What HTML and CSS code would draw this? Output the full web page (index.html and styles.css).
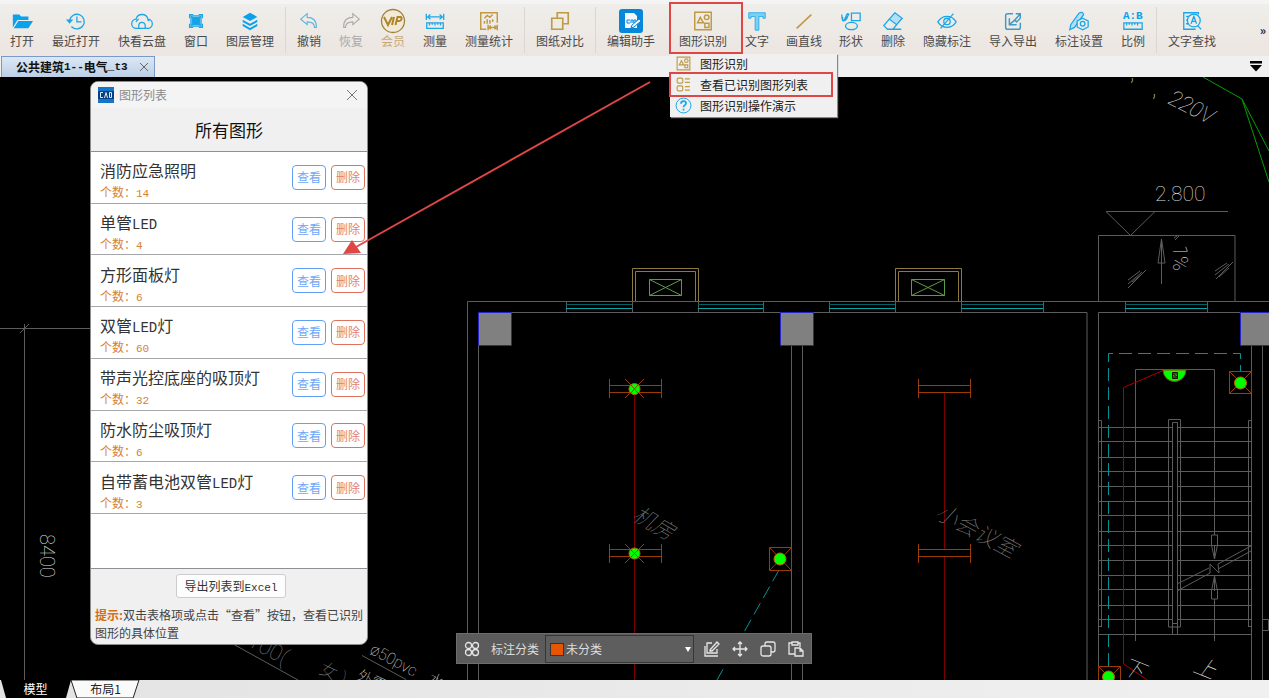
FILE: index.html
```html
<!DOCTYPE html>
<html lang="zh-CN">
<head>
<meta charset="utf-8">
<title>公共建筑1--电气_t3</title>
<link rel="stylesheet" href="styles.css">
</head>
<body>
<div class="app">
  <header class="toolbar">
    <button class="tool"><svg class="icon" viewBox="0 0 24 24"><path fill="#0aa2ea" d="M2 19V5h7l2 2h8v4H7z"/><path fill="#0aa2ea" d="M8 12h16l-5 8H3z"/></svg><span>打开</span></button>
    <button class="tool wide"><svg class="icon line" viewBox="0 0 24 24"><path d="M5 12a8 8 0 1 1 2 6M13 7v6h5"/><path fill="#0aa2ea" d="M2.500 11h5L5 14z"/></svg><span>最近打开</span></button>
    <button class="tool wide"><svg class="icon line" viewBox="0 0 24 24"><path d="M8 20H6a5 5 0 0 1-.5-10 6.700 6.700 0 0 1 13 0 5 5 0 0 1-.5 10h-2M8.500 20v-3a3.500 3.500 0 0 1 7 0v3zM5.500 13a5 5 0 0 1 3-3M18 10.500l2 1.500"/></svg><span>快看云盘</span></button>
    <button class="tool"><svg class="icon line" viewBox="0 0 24 24"><path fill="#0aa2ea" d="M8 8h8v8H8z"/><path d="M5 9V5h4M15 5h4v4M19 15v4h-4M9 19H5v-4M6 6l12 12M18 6 6 18M8 6.500h8M8 17.500h8M6.500 8v8M17.500 8v8"/></svg><span>窗口</span></button>
    <button class="tool wide"><svg class="icon" viewBox="0 0 24 24"><path fill="#0aa2ea" d="m12 3 8 4.500-8 4.500-8-4.500zM4 10.500l8 4.500 8-4.500V13l-8 4.500L4 13zM4 15l8 4.500 8-4.500v2.500L12 22l-8-4.500z"/></svg><span>图层管理</span></button>
    <i class="sep"></i>
    <button class="tool"><svg class="icon soft" viewBox="0 0 24 24"><path d="m3 10 7-6v4c6 0 10 3 10 10v1h-2c0-4-3-6-8-6v3z"/></svg><span>撤销</span></button>
    <button class="tool dim"><svg class="icon grey" viewBox="0 0 24 24"><path d="m21 10-7-6v4C8 8 4 11 4 18v1h2c0-4 3-6 8-6v3z"/></svg><span>恢复</span></button>
    <button class="tool vip"><svg class="icon big" viewBox="0 0 26 26"><circle cx="13" cy="13" r="11.500" fill="#f1ead8" stroke="#a3823d" stroke-width="1.300"/><path fill="none" stroke="#b08527" stroke-width="2" d="m4 9 4 8 4-8M14 9l-2 8M15.500 17l2-8h3c2 0 1 4-1 4H17"/></svg><span>会员</span></button>
    <button class="tool"><svg class="icon line" viewBox="0 0 24 24"><path d="M2.500 4v7M21.500 4v7M4 7.500h16M7 5 4 7.500 7 10M17 5l3 2.500-3 2.500M3 14h18v6H3zM6 14v3M9 14v2M12 14v3M15 14v2M18 14v3"/></svg><span>测量</span></button>
    <button class="tool wide"><svg class="icon gold" viewBox="0 0 24 24"><path d="M9 21H3V3h18v11M7 15v-3M10 15v-5M13 15v-4M16 13v-3M7 9l3-3 3 2 3-3M11 16v6M21 16v6M12 19h8M14 17l-2 2 2 2M18 17l2 2-2 2"/></svg><span>测量统计</span></button>
    <i class="sep"></i>
    <button class="tool wide"><svg class="icon gold" viewBox="0 0 24 24"><path stroke-width="1.800" d="M9 9V3h12v12h-6M3 9h12v12H3z"/></svg><span>图纸对比</span></button>
    <i class="sep"></i>
    <button class="tool wide"><svg class="icon big" viewBox="0 0 26 26"><rect x="1" y="1" width="24" height="24" rx="3" fill="#0787da"/><path fill="#f2f8fd" d="M7 5h9l3 3v12H7z"/><path d="M12 12H9v3h3M13 15v-3h2v3M16 12h2v3h-2z" fill="none" stroke="#0787da"/><path stroke="#0787da" fill="#f2f8fd" d="m14 17 7-6 2 2-7 6-3 1z"/></svg><span>编辑助手</span></button>
    <div class="tool-group">
      <button class="tool wide"><svg class="icon gold" viewBox="0 0 24 24"><path d="M3 2.500h18v19H3zM6 14l3-6 3.500 6zM14 14.500h4.500v4.500H14z"/><circle cx="16" cy="8" r="2.500"/></svg><span>图形识别</span></button>
      <div class="menu">
        <button class="menu-item"><svg viewBox="0 0 24 24" class="menu-icon gold"><path d="M3 3h18v18H3zM6 14l3-6 3.500 6zM14 14h4v4h-4z"/><circle cx="16" cy="8" r="2.500"/></svg><span>图形识别</span></button>
        <button class="menu-item marked"><svg viewBox="0 0 24 24" class="menu-icon gold"><rect x="3" y="3" width="8" height="7" rx="2"/><rect x="3" y="14" width="8" height="7" rx="2"/><path d="M14 4h7M14 9h7M14 15h7M14 20h7"/></svg><span>查看已识别图形列表</span></button>
        <button class="menu-item"><svg viewBox="0 0 24 24" class="menu-icon line"><circle cx="12" cy="12" r="10.500"/><path stroke-width="2.500" d="M8.500 9.500c0-5 7-4.500 7-.5 0 2.500-3.500 2.500-3.500 5.500M12 16.500v2.500"/></svg><span>图形识别操作演示</span></button>
      </div>
    </div>
    <button class="tool"><svg class="icon" viewBox="0 0 24 24"><path fill="#7fd0f5" stroke="#25ace9" d="M3 3h18v6h-2.500V7H14v15h-4V7H5.500v2H3z"/></svg><span>文字</span></button>
    <button class="tool mid"><svg class="icon gold" viewBox="0 0 24 24"><path stroke-width="1.800" d="M4 20 20 5"/></svg><span>画直线</span></button>
    <button class="tool"><svg class="icon line" viewBox="0 0 24 24"><path d="M12.500 3.500H22v8h-9.500zM2 5c0 8 2 9 4 3s4-5 2 0-6 5-5-.500M10 4 5 12"/><ellipse cx="12.500" cy="17.500" rx="6.500" ry="4"/></svg><span>形状</span></button>
    <button class="tool"><svg class="icon line" viewBox="0 0 24 24"><path fill="#b7dff2" d="m14 3 8 6-6 7-8-6z"/><path d="m8 10-6 7 4 4h6l4-5M6 21h15"/></svg><span>删除</span></button>
    <button class="tool wide"><svg class="icon line" viewBox="0 0 24 24"><path d="M2 13c5-8 15-8 20 0-5 8-15 8-20 0zM19 4 5 20"/><circle cx="12" cy="12.500" r="3.500"/></svg><span>隐藏标注</span></button>
    <button class="tool wide"><svg class="icon export" viewBox="0 0 24 24"><path d="M12 4H6a2 2 0 0 0-2 2v13a2 2 0 0 0 2 2h12a2 2 0 0 0 2-2v-5M15 4h5v5M20 4l-7 8M8 9v7h8M8 16l6-5 2 2 4-4"/></svg><span>导入导出</span></button>
    <button class="tool wide"><svg class="icon line" viewBox="0 0 24 24"><path fill="#b7dff2" d="M12 3.500q4-2.500 5 1.500L7 19l-5 2.500L3 16z"/><path fill="#edebe8" d="m16 9 6 3v6.500l-6 3-6-3V12z"/><circle cx="16" cy="15" r="2.500"/></svg><span>标注设置</span></button>
    <button class="tool"><svg class="icon line" viewBox="0 0 24 24"><text x="1" y="10" class="ratio">A:B</text><path d="M2 14h20v7H2zM5 14v3M8 14v2M11 14v3M14 14v2M17 14v3"/></svg><span>比例</span></button>
    <i class="sep"></i>
    <button class="tool wide"><svg class="icon line" viewBox="0 0 24 24"><path d="M19 5V3H3v18h13M5.500 7h3M5.500 11h2M5.500 15h3M18 17l4 4M11 15l3-8 3 8M12 12.500h4"/><circle cx="14" cy="11.500" r="7"/></svg><span>文字查找</span></button>
    <button class="more" aria-label="更多">»</button>
  </header>

  <nav class="doc-tabs">
    <button class="doc-tab">公共建筑<span class="latin">1--</span>电气<span class="latin">_t3</span><svg class="tab-close" viewBox="0 0 8 8"><path d="m0 0 8 8M8 0 0 8"/></svg></button>
    <button class="tab-list" aria-label="文档列表"><svg viewBox="0 0 12 11"><path d="M0 0h12v2.500H0zM0 4h12l-6 6.500z"/></svg></button>
  </nav>

  <main class="canvas">
    <svg class="drawing">
      <g transform="translate(0,-77)">
        <g class="wall">
          <path d="M467.500 680V301.500H1269M478.500 680V345M511 312.500h269M813 312.500h274V680M791.500 345v335M802.500 345v335M1098.500 680V312.500H1240M1098.500 301V235.500H1235V301M1251.500 345v335M1262.500 345v335M1262.500 619.500h6v11h-6"/>
          <path d="M566.500 301v11M632.500 301v11M698.500 301v11M763.500 301v11M829.500 301v11M895.500 301v11M961.500 301v11M1043.500 301v11M1125.500 301v11M1207.500 301v11"/>
          <path d="M0 328.500h90M24.500 324v356M20 333l9-9M1106 211.500h122M1106 211.500l24.500 24 24.500-24"/>
          <path d="M1161.500 284v-45l-3.500 24h7l-3.500-24M1128 280l12-9M1128 284l14-12M1128 288l18-18M1132 282l10-8M1215 271l12-8M1215 275l14-11M1216 279l17-17M1219 277l10-9M1174 238l3-2M1175 240l4-4"/>
          <path d="M1135.500 641V369.500H1214.500V535M1214.500 599v42M1101.500 627V420.500h-3M1098 626.500h3M1248.500 627V420.500h3M1248 626.500h3M1168.500 627V419.500h12V627zM1172.500 634V422.500h5V634M1172.500 623.500h5"/>
          <path d="M1098 427.500h74M1177 427.500h74M1098 441.500h74M1177 441.500h74M1098 457.500h74M1177 457.500h74M1098 471.500h74M1177 471.500h74M1098 486.500h74M1177 486.500h74M1098 501.500h74M1177 501.500h74M1098 515.500h74M1177 515.500h74M1098 531.500h74M1177 531.500h74M1098 545.500h74M1177 545.500h74M1098 560.500h74M1177 560.500h74M1098 575.500h74M1177 575.500h74M1098 589.500h74M1177 589.500h74M1098 605.500h74M1177 605.500h74M1098 619.500h74M1177 619.500h74M1098 634.500h153"/>
          <path d="m1177 584 32-16M1177 591l33-18v-9l9 9-1-9 33-18M1218 569l33-18M1211.500 535h6v10l-3 14-3-14zM1214.500 559v-14M1211.500 599h6v-8l-3-15-3 15zM1214.500 576v15"/>
          <path d="m233 644 65 36M362 655.500l44 24"/>
        </g>
        <g class="teal">
          <path d="M566 304.500h66M698 304.500h65M829 304.500h66M962 304.500h81M1125 304.500h82"/>
          <path class="bright" d="M566 308.500h66M698 308.500h65M829 308.500h66M962 308.500h81M1125 308.500h82"/>
          <path class="dash" d="M1108.500 666V353.500H1240.500V371M779 570 717 680"/>
        </g>
        <g class="bay"><path d="M632.500 301V268.500h66V301M635.500 301V271.500h60V301M895.500 301V268.500h66V301M898.500 301V271.500h60V301"/></g>
        <g class="green"><path d="M649.500 279.500h32v16h-32zl32 16M681.500 279.500l-32 16M911.500 279.500h33v16h-33zl33 16M944.500 279.500l-33 16"/></g>
        <g class="beam"><path d="M1203 77l39 22 27 83M1242 99l27 52"/></g>
        <g class="column"><path d="M478.500 312.500h33v33h-33zM780.500 312.500h33v33h-33zM1240.500 312.500h33v33h-33z"/></g>
        <g class="wire"><path d="M634.500 393v287M944.500 393v157M944.500 557v123"/><path class="hot" d="M1163 370.500l-39.500 17V664l24 16"/></g>
        <g class="lamp">
          <path d="M609.500 379v19M661.500 379v19M609 385.500h52M609 392.500h52M609.500 544v19M661.500 544v19M609 549.500h52M609 556.500h52M918.500 379v19M970.500 379v19M918 385.500h52M918 392.500h52M918.500 544v19M970.500 544v19M918 549.500h52M918 556.500h52"/>
          <path d="m625 379 19 19M644 379l-19 19M625 544l19 19M644 544l-19 19M769.500 547.500h22v23h-22zl22 23M791.500 547.500l-22 23M1229.500 371.500h22v22h-22zl22 22M1251.500 371.500l-22 22M1098.500 680v-13.500h22V680M1098.500 666.500l22 22M1120.500 666.500l-22 22"/>
          <circle cx="634.500" cy="389" r="5.500"/><circle cx="634.500" cy="553.500" r="5.500"/><circle cx="780" cy="559" r="6"/><circle cx="1240.500" cy="383" r="6"/><circle cx="1108.500" cy="677" r="6"/>
          <path d="m631 385 7 8M638 385l-7 8M631 550l7 7M638 550l-7 7"/>
          <path fill="#0f0" d="M1163 370h23a11.500 11.500 0 0 1-23 0z"/><path stroke="#210" fill="#3a3" d="M1172.500 372.500h5v6h-5zM1177 374h-4l4 3h-4"/>
        </g>
        <g class="note">
          <text font-size="21" x="1155" y="201">2.800</text>
          <text font-size="20" transform="translate(40,534) rotate(90)">8400</text>
          <text font-size="20" transform="translate(1173,245) rotate(90)">1%</text>
          <text font-size="22" font-style="italic" transform="translate(1167,103) rotate(27)">220V</text>
          <text font-size="24" x="1152" y="96">,</text><text font-size="24" x="1130" y="80">,</text>
          <text font-size="16" transform="translate(369,653) rotate(28)">ø50pvc</text>
          <text font-size="15" transform="translate(356,679) rotate(25)">外需</text>
          <text font-size="15" transform="translate(427,682) rotate(25)">水</text>
          <text font-size="22" font-style="italic" transform="translate(1120,672) rotate(22)">下</text>
          <text font-size="22" font-style="italic" transform="translate(1192,671) rotate(22)">上</text>
        </g>
        <g class="note faint">
          <text font-size="22" font-style="italic" transform="translate(631,519) rotate(30)">机房</text>
          <text font-size="22" font-style="italic" transform="translate(934,517) rotate(28)">小会议室</text>
          <text font-size="22" transform="translate(246,645) rotate(28)">100(</text>
          <text font-size="18" transform="translate(318,673) rotate(25)">女 )</text>
        </g>
      </g>
    </svg>

    <section class="dialog">
      <header class="dialog-bar">
        <svg class="dialog-logo" viewBox="0 0 16 16"><path fill="#1775c9" d="M0 0h16v16H0z"/><path fill="#0b3f83" d="M0 4h16v8H0z"/><path fill="none" stroke="#d5ebff" d="M5 5.500H2.500v5H5M6.500 11l1.500-5.500L9.500 11M11.500 5.500h2v5h-2z"/></svg>
        <span>图形列表</span>
        <button class="dialog-close" aria-label="关闭"><svg viewBox="0 0 10 10"><path d="m0 0 10 10M10 0 0 10"/></svg></button>
      </header>
      <h1 class="dialog-title">所有图形</h1>
      <div class="list-box">
        <ul class="list">
          <li><div class="entry"><b>消防应急照明</b><small>个数：<span class="latin">14</span></small></div><button class="view">查看</button><button class="remove">删除</button></li>
          <li><div class="entry"><b>单管<span class="latin">LED</span></b><small>个数：<span class="latin">4</span></small></div><button class="view">查看</button><button class="remove">删除</button></li>
          <li><div class="entry"><b>方形面板灯</b><small>个数：<span class="latin">6</span></small></div><button class="view">查看</button><button class="remove">删除</button></li>
          <li><div class="entry"><b>双管<span class="latin">LED</span>灯</b><small>个数：<span class="latin">60</span></small></div><button class="view">查看</button><button class="remove">删除</button></li>
          <li><div class="entry"><b>带声光控底座的吸顶灯</b><small>个数：<span class="latin">32</span></small></div><button class="view">查看</button><button class="remove">删除</button></li>
          <li><div class="entry"><b>防水防尘吸顶灯</b><small>个数：<span class="latin">6</span></small></div><button class="view">查看</button><button class="remove">删除</button></li>
          <li><div class="entry"><b>自带蓄电池双管<span class="latin">LED</span>灯</b><small>个数：<span class="latin">3</span></small></div><button class="view">查看</button><button class="remove">删除</button></li>
        </ul>
      </div>
      <footer class="dialog-foot">
        <button class="export-btn">导出列表到<span class="latin">Excel</span></button>
        <p class="hint"><strong>提示:</strong>双击表格项或点击“查看”按钮，查看已识别图形的具体位置</p>
      </footer>
    </section>

    <div class="float-bar">
      <svg class="float-icon" viewBox="0 0 16 16"><circle cx="4.500" cy="4.500" r="3"/><circle cx="11.500" cy="4.500" r="3"/><circle cx="4.500" cy="11.500" r="3"/><circle cx="11.500" cy="11.500" r="3"/></svg>
      <label class="float-label" for="category">标注分类</label>
      <div class="category"><i class="swatch"></i><select id="category"><option>未分类</option></select></div>
      <div class="float-actions">
        <button aria-label="编辑"><svg class="float-icon" viewBox="0 0 16 16"><path d="M8 2H3v10h10V8M1 5v10h13M6 9l7-8 2 2-7 7H6z"/></svg></button>
        <button aria-label="移动"><svg class="float-icon" viewBox="0 0 16 16"><path d="M8 1v14M1 8h14M6 3l2-2 2 2M6 13l2 2 2-2M3 6 1 8l2 2M13 6l2 2-2 2"/></svg></button>
        <button aria-label="复制"><svg class="float-icon" viewBox="0 0 16 16"><rect x="1" y="5" width="10" height="10" rx="2"/><path d="M5 5V3q0-2 2-2h6q2 0 2 2v6q0 2-2 2h-2"/></svg></button>
        <button aria-label="粘贴"><svg class="float-icon" viewBox="0 0 16 16"><path d="M7 13H1V2h3M10 2h2v4M4 1h6v3H4zM7 7h5l3 3v5H7zM12 7v3h3"/></svg></button>
      </div>
    </div>

    <svg class="pointer"><g transform="translate(0,-77)"><path stroke="#df4646" stroke-width="2" d="M650 82 356 247"/><path fill="#df4646" d="m343 254 9-14 9 13z"/></g></svg>
  </main>

  <nav class="sheets">
    <button class="sheet active">模型</button>
    <button class="sheet"><svg class="edge" viewBox="0 0 70 18" preserveAspectRatio="none"><path d="M0 0h69l-6 18H6z"/></svg><span>布局1</span></button>
  </nav>
</div>
</body>
</html>
```
FILE: styles.css
```css
* { box-sizing: border-box; }
body { margin: 0; font: 12px/16px "Noto Sans CJK SC", sans-serif; color: #222; }
button { font: inherit; color: inherit; background: none; border: 0; padding: 0; }
svg { display: block; fill: none; }
.app { display: flex; flex-direction: column; height: 100vh; background: #f0f0f0; }
.latin { font-family: "Liberation Mono", monospace; font-size: 11px; line-height: 1; }

.toolbar { display: flex; align-items: stretch; height: 56px; padding-left: 1px; border-top: 4px solid #f4f4f4; background: linear-gradient(#efeeea, #ece5e1); }
.tool { display: flex; flex: none; flex-direction: column; align-items: center; width: 42px; padding-top: 6px; gap: 1px; color: #4a4a4a; white-space: nowrap; }
.tool.mid { width: 52px; }
.tool.wide { width: 66px; }
.icon { width: 22px; height: 22px; overflow: visible; }
.icon.big { width: 26px; height: 26px; margin: -2px 0; }
.line { stroke: #1aa7e8; stroke-width: 1.4; }
.soft { stroke: #58b4dc; stroke-width: 1.2; }
.grey { stroke: #aaa; stroke-width: 1.2; }
.gold { stroke: #c09a45; stroke-width: 1.6; }
.export { stroke: #4499c3; stroke-width: 1.6; }
.ratio { font: bold 12px "Liberation Mono", monospace; fill: #0aa2ea; stroke: none; }
.tool.dim { color: #aaa; }
.tool.vip { color: #c9a877; }
.sep { flex: none; width: 1px; margin: 3px 2px; background: #d9d6d3; }
.more { margin-left: auto; padding-right: 3px; font-weight: bold; }

.tool-group { position: relative; flex: none; margin-left: 6px; }
.tool-group::after { content: ""; position: absolute; inset: -2px -7px 2px -1px; border: 2px solid #df4646; pointer-events: none; }
.menu { position: absolute; z-index: 5; top: 50px; left: 0; background: #f0f0f0; box-shadow: 1px 1px 1px #888; }
.menu-item { display: flex; align-items: center; gap: 8px; width: 167px; height: 21px; padding: 0 0 2px 5px; white-space: nowrap; }
.menu-icon { width: 17px; height: 17px; }
.marked { position: relative; }
.marked::after { content: ""; position: absolute; inset: -3px 4px -1px -1px; border: 2px solid #df4646; }

.doc-tabs { display: flex; flex: none; justify-content: space-between; height: 21px; padding: 0 7px 0 1px; background: #f0f0f0; }
.doc-tab { display: flex; align-items: center; padding: 0 6px 0 14px; border: 1px solid #799bc9; border-bottom: 0; background: linear-gradient(#dce7f4, #bccfe7); font-weight: bold; color: #111; }
.tab-close { width: 8px; height: 8px; margin-left: 12px; stroke: #666; }
.tab-list svg { width: 12px; height: 11px; fill: #000; }

.canvas { position: relative; flex: 1; min-height: 0; overflow: hidden; background: #000; }
.drawing, .pointer { position: absolute; inset: 0; width: 100%; height: 100%; }
.pointer { pointer-events: none; }
.wall { stroke: #5c5c5c; }
.teal { stroke: #045f62; }
.teal .bright { stroke: #08a5a8; }
.teal .dash { stroke: #079093; stroke-dasharray: 13 6; }
.bay { stroke: #8d7a3c; }
.green { stroke: #5b9b48; }
.beam { stroke: #00a000; }
.column { fill: #808080; stroke: #2525c8; }
.wire { stroke: #7a0000; }
.wire .hot { stroke: #a80000; }
.lamp { stroke: #9a3c05; }
.lamp circle { fill: #0f0; stroke: #c06000; }
.note { font-family: Roboto, "Noto Sans CJK SC", sans-serif; font-weight: 100; fill: #ddd; }
.note.faint { fill: #777; }

.dialog { position: absolute; top: 4px; left: 90px; width: 278px; overflow: hidden; border: 1px solid #8c8c8c; border-radius: 8px; background: #f0f0f0; }
.dialog-bar { display: flex; align-items: center; gap: 5px; height: 26px; padding: 0 10px 0 7px; background: #f4f4f4; color: #8a8a8a; }
.dialog-logo { width: 16px; height: 16px; }
.dialog-close { margin-left: auto; }
.dialog-close svg { width: 10px; height: 10px; stroke: #777; }
.dialog-title { margin: 0; font-size: 17px; font-weight: normal; line-height: 43px; text-align: center; color: #111; }
.list-box { padding-bottom: 54px; border: solid #8d9095; border-width: 1px 0; background: #fff; }
.list { display: grid; grid-auto-rows: 1fr; height: 362px; margin: 0; padding: 0; list-style: none; }
.list li { display: flex; align-items: center; gap: 5px; padding: 0 2px 0 9px; border-bottom: 1px solid #a5a7aa; }
.entry { flex: 1; padding-top: 6px; }
.entry b, .entry small { display: block; font-weight: normal; }
.entry b { font-size: 16px; line-height: 24px; color: #333; }
.entry b .latin { font-size: 14px; }
.entry small { font-size: 12px; line-height: 20px; color: #d58235; }
.view, .remove { width: 34px; height: 25px; border: 1px solid #62a0f5; border-radius: 4px; color: #6ea8f7; background: #fff; }
.remove { border-color: #e0725d; color: #e27f70; }
.dialog-foot { padding: 5px 0 2px 4px; }
.export-btn { display: block; height: 24px; margin: 0 auto 8px; padding: 0 7px; border: 1px solid #ccc; border-radius: 3px; background: #fdfdfd; color: #333; }
.hint { margin: 0; line-height: 18px; color: #444; }
.hint strong { color: #d46f18; }

.float-bar { position: absolute; left: 456px; bottom: 16px; display: flex; align-items: center; height: 31px; padding-left: 7px; border: 1px solid #6d6d6d; background: #5b5b5b; color: #ddd; }
.float-icon { width: 16px; height: 16px; stroke: #e6e6e6; stroke-width: 1.3; }
.float-label { margin: 0 6px 0 11px; }
.category { position: relative; width: 149px; }
.category::after { content: ""; position: absolute; top: 12px; right: 3px; border: solid transparent; border-width: 5px 3px 0; border-top-color: #fff; }
.category select { width: 100%; height: 28px; padding: 0 20px 0 20px; appearance: none; border: 1px solid #363636; border-radius: 0; background: #5e5e5e; color: #ddd; font: inherit; }
.swatch { position: absolute; top: 8px; left: 5px; width: 14px; height: 13px; border: 1px solid #333; background: #e85500; }
.float-actions { display: flex; gap: 12px; padding: 0 7px 0 10px; }

.sheets { display: flex; flex: none; height: 18px; overflow: hidden; background: linear-gradient(90deg, #e3e3e3, #f0f0f0); }
.sheet { position: relative; display: flex; align-items: center; justify-content: center; width: 69px; }
.sheet span { position: relative; }
.sheet.active { width: 71px; color: #fff; background: #000; clip-path: polygon(1px 0, 100% 0, 66px 100%, 6px 100%); }
.edge { position: absolute; inset: 0; width: 100%; height: 100%; fill: #fafafa; stroke: #222; }
```
